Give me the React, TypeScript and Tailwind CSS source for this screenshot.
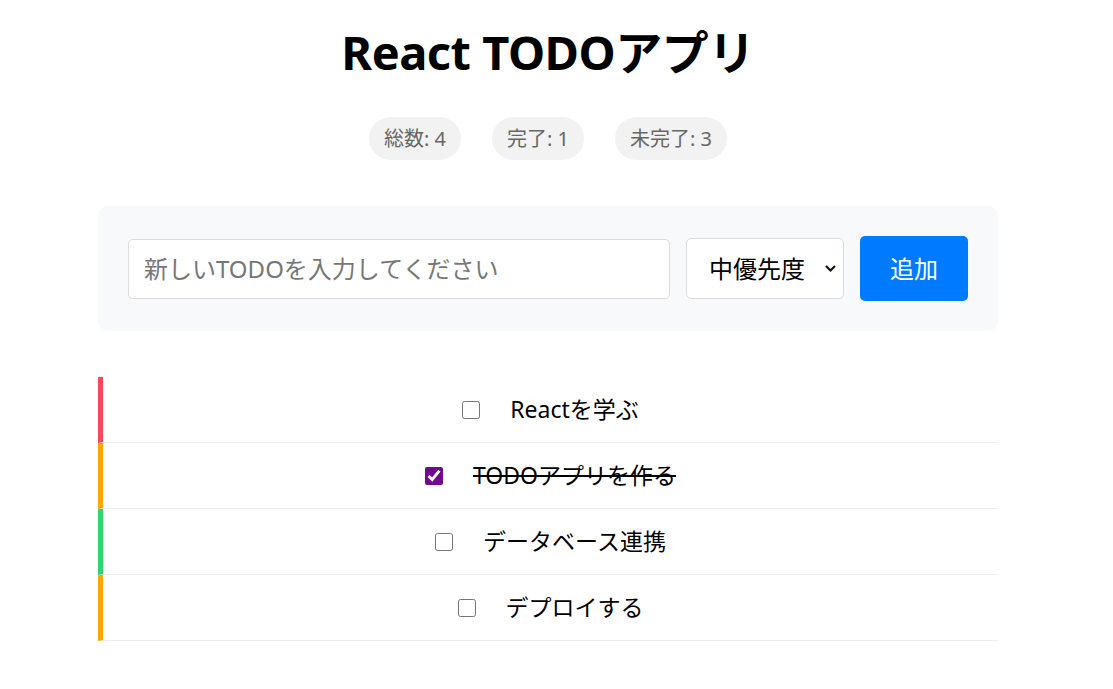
const todos = [
  { id: 1, text: 'Reactを学ぶ', done: false, bar: 'border-l-[#f44a5c]' },
  { id: 2, text: 'TODOアプリを作る', done: true, bar: 'border-l-[#ffa502]' },
  { id: 3, text: 'データベース連携', done: false, bar: 'border-l-[#2ed573]' },
  { id: 4, text: 'デプロイする', done: false, bar: 'border-l-[#ffa502]' },
]

export default function App() {
  const total = todos.length
  const done = todos.filter((t) => t.done).length

  return (
    <div className="min-h-screen bg-white font-['Noto_Sans','Noto_Sans_CJK_JP',sans-serif] text-black">
      <div className="w-[1096px]">
        <div className="mx-auto w-[900px] pt-[24px]">
          <h1 className="text-center text-[47px] font-bold leading-[56px] tracking-[-0.5px]">
            React TODOアプリ
          </h1>

          <div className="mt-[37px] flex justify-center gap-[31px]">
            <span className="rounded-full bg-[#f2f2f2] px-[15px] h-[43px] flex items-center text-[20px] text-[#666]">
              総数: {total}
            </span>
            <span className="rounded-full bg-[#f2f2f2] px-[15px] h-[43px] flex items-center text-[20px] text-[#666]">
              完了: {done}
            </span>
            <span className="rounded-full bg-[#f2f2f2] px-[15px] h-[43px] flex items-center text-[20px] text-[#666]">
              未完了: {total - done}
            </span>
          </div>

          <div className="mt-[46px] flex items-center gap-[16px] rounded-[10px] bg-[#f8f9fa] px-[30px] py-[30px]">
            <input
              type="text"
              placeholder="新しいTODOを入力してください"
              className="h-[60px] flex-1 rounded-[5px] border border-[#ddd] bg-white px-[15px] text-[24px] placeholder:text-[#777] outline-none"
            />
            <div className="relative">
              <select
                defaultValue="medium"
                className="h-[61px] w-[158px] appearance-none rounded-[5px] border border-[#ddd] bg-white pl-[22px] text-[24px] text-black outline-none"
              >
                <option value="high">高優先度</option>
                <option value="medium">中優先度</option>
                <option value="low">低優先度</option>
              </select>
              <svg
                className="pointer-events-none absolute right-[7px] top-[26px]"
                width="13"
                height="9"
                viewBox="0 0 13 9"
                fill="none"
              >
                <path d="M2 2l4.5 4.5L11 2" stroke="#111" strokeWidth="2.2" />
              </svg>
            </div>
            <button className="h-[65px] w-[108px] rounded-[5px] bg-[#007bff] text-[24px] text-white">
              追加
            </button>
          </div>

          <ul className="mt-[46px]">
            {todos.map((t) => (
              <li
                key={t.id}
                className={`flex h-[66px] items-center justify-center gap-[30px] border-b border-b-[#eee] border-l-[5px] ${t.bar}`}
              >
                <input
                  type="checkbox"
                  defaultChecked={t.done}
                  className="h-[18px] w-[18px] accent-[#6f0a8e]"
                />
                <span className={`text-[23px] ${t.done ? 'line-through' : ''}`}>
                  {t.text}
                </span>
              </li>
            ))}
          </ul>
        </div>
      </div>
    </div>
  )
}
